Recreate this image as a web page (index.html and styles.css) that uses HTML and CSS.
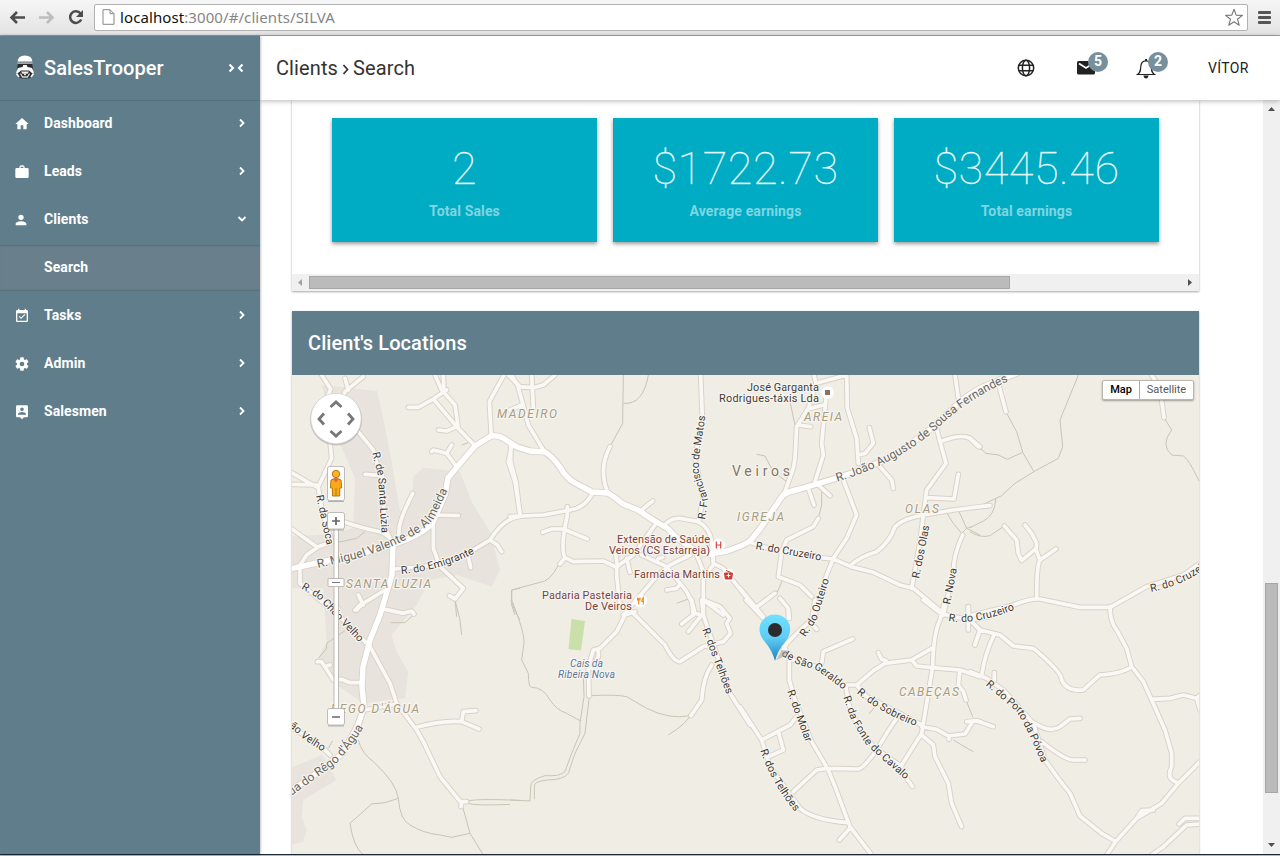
FILE: index.html
```html
<!DOCTYPE html>
<html lang="en">
<head>
<meta charset="utf-8">
<title>SalesTrooper</title>
<link rel="stylesheet" href="styles.css">
</head>
<body>
<svg class="defs" width="0" height="0">
  <symbol id="chev" viewBox="0 0 8 10"><path d="M2 1.5 5.5 5 2 8.500" fill="none" stroke="currentColor" stroke-width="1.800"/></symbol>
</svg>
<div class="browser">
  <svg class="nav-icons" width="94" height="36" viewBox="0 0 94 36" fill="none">
    <path d="M25 17.500H11.500M17 12l-5.500 5.500L17 23" stroke="#4d4d4d" stroke-width="2.600"/>
    <path d="M39 17.500h13.500M47 12l5.500 5.500L47 23" stroke="#bdbdbd" stroke-width="2.600"/>
    <path d="M80.500 13.500A5.800 5.800 0 1 0 81.200 19.500" stroke="#4d4d4d" stroke-width="2.500"/>
    <path d="M83 10v7h-7z" fill="#4d4d4d"/>
  </svg>
  <div class="address">
    <svg width="13" height="16" viewBox="0 0 13 16"><path d="M1 .7h7l4 4v10.600H1zM8 .7v4h4" fill="#fff" stroke="#888"/></svg>
    <span class="url"><b>localhost</b>:3000/#/clients/SILVA</span>
    <svg class="star" width="20" height="19" viewBox="0 0 20 19"><path d="M10 1.300l2.200 5.800 6.200.3-4.900 3.800 1.700 6L10 13.800l-5.200 3.400 1.700-6L1.600 7.400l6.200-.3z" fill="#fff" stroke="#777" stroke-width="1.100" stroke-linejoin="round"/></svg>
  </div>
  <div class="burger"><i></i><i></i><i></i></div>
</div>
<div class="app">
  <aside class="sidebar">
    <div class="brand">
      <svg width="20" height="24" viewBox="0 0 20 24">
        <path d="M3 7.500 1.500 17.500 3 22l4 1.500h6L17 22l1.500-4.500L17 7.500z" fill="#2b2b2b"/>
        <path d="M2.600 6.500Q3 .500 10 .500T17.400 6.500z" fill="#fff"/>
        <path d="M2.500 7.500h15v1.200h-15z" fill="#ddd"/>
        <path d="M8.300 10h3.400l.8 2 4.500 1 2 4.500-1.500 1-3.500-3H6l-3.500 3-1.500-1L3 13l4.500-1z" fill="#fff"/>
        <path d="M6 16.500h8l-1.500 2.300h-5z" fill="#eee"/><path d="M5.500 18.500 7.500 22h5l2-3.500M9 19.500h2" stroke="#ddd" stroke-width="1.300" fill="none"/>
        <path d="M1.500 18.500 4 22M18.500 18.500 16 22" stroke="#fff" stroke-width="1.600"/>
      </svg>
      <span>SalesTrooper</span>
      <svg class="collapse" width="16" height="10" viewBox="0 0 16 10" fill="none" stroke="#fff" stroke-width="2"><path d="M1.500 1.500 5 5 1.500 8.500M14.500 1.500 11 5l3.500 3.500"/></svg>
    </div>
    <a class="item"><svg class="ic" viewBox="0 0 24 24"><path d="M10 20v-6h4v6h5v-8h3L12 3 2 12h3v8z"/></svg>Dashboard<svg class="chev"><use href="#chev"/></svg></a>
    <a class="item"><svg class="ic" viewBox="0 0 24 24"><path d="M20 6h-4V4l-2-2h-4L8 4v2H4a2 2 0 0 0-2 2v11a2 2 0 0 0 2 2h16a2 2 0 0 0 2-2V8a2 2 0 0 0-2-2zm-6 0h-4V4h4z"/></svg>Leads<svg class="chev"><use href="#chev"/></svg></a>
    <a class="item"><svg class="ic person" viewBox="0 0 24 24"><path d="M12 12a4 4 0 1 0 0-8 4 4 0 0 0 0 8zm0 2c-2.700 0-8 1.300-8 4v2h16v-2c0-2.700-5.300-4-8-4z"/></svg>Clients<svg class="chev down"><use href="#chev"/></svg></a>
    <a class="item sub">Search</a>
    <a class="item"><svg class="ic" viewBox="0 0 24 24"><path d="M10.600 16.500 17 10.100 15.900 9l-5.300 5.300-2.200-2.200-1.100 1.100zM19 3h-1V1h-2v2H8V1H6v2H5a2 2 0 0 0-2 2v14c0 1.100.9 2 2 2h14a2 2 0 0 0 2-2V5a2 2 0 0 0-2-2zm0 16H5V8h14z"/></svg>Tasks<svg class="chev"><use href="#chev"/></svg></a>
    <a class="item"><svg class="ic" viewBox="0 0 24 24"><path d="M19.430 12.980c.04-.32.07-.64.07-.98s-.03-.66-.07-.98l2.110-1.650c.19-.15.24-.42.12-.64l-2-3.460c-.12-.22-.39-.3-.61-.22l-2.490 1c-.52-.4-1.080-.73-1.690-.98l-.38-2.650A.49.490 0 0 0 14 2h-4c-.25 0-.46.18-.49.42l-.38 2.650c-.61.25-1.170.59-1.690.98l-2.490-1c-.23-.09-.49 0-.61.22l-2 3.460c-.13.22-.07.49.12.64l2.110 1.650c-.04.32-.07.65-.07.98s.03.66.07.98l-2.110 1.650c-.19.15-.24.42-.12.640l2 3.460c.12.22.39.3.61.22l2.490-1c.52.4 1.080.73 1.690.98l.38 2.650c.03.24.24.42.49.42h4c.25 0 .46-.18.49-.42l.38-2.650c.61-.25 1.170-.59 1.690-.98l2.490 1c.23.09.49 0 .61-.22l2-3.460c.12-.22.07-.49-.12-.64zM12 15.500a3.500 3.500 0 1 1 0-7 3.500 3.500 0 0 1 0 7z"/></svg>Admin<svg class="chev"><use href="#chev"/></svg></a>
    <a class="item"><svg class="ic" viewBox="0 0 24 24"><path d="M19 2H5a2 2 0 0 0-2 2v14c0 1.100.9 2 2 2h4l3 3 3-3h4a2 2 0 0 0 2-2V4a2 2 0 0 0-2-2zm-7 3.300a2.700 2.700 0 1 1 0 5.400 2.700 2.700 0 0 1 0-5.400zM18 16H6v-.9c0-2 4-3.100 6-3.100s6 1.100 6 3.100z"/></svg>Salesmen<svg class="chev"><use href="#chev"/></svg></a>
  </aside>
  <div class="main">
    <header class="topbar">
      <div class="crumbs">Clients <svg width="7" height="11" viewBox="0 0 7 11"><path d="M1.500 1 5.500 5.500 1.500 10" fill="none" stroke="#333" stroke-width="1.700"/></svg> Search</div>
      <svg class="globe" width="18" height="18" viewBox="0 0 18 18" fill="none" stroke="#222" stroke-width="1.500"><circle cx="9" cy="9" r="7.700"/><ellipse cx="9" cy="9" rx="3.600" ry="7.700"/><path d="M2 6.200h14M2 11.800h14"/></svg>
      <div class="note mail"><svg width="18" height="14" viewBox="0 0 18 14"><rect width="18" height="13.500" rx="1.500" fill="#222"/><path d="M2 2.500 9 7l7-4.500" fill="none" stroke="#fff" stroke-width="1.700"/></svg><b>5</b></div>
      <div class="note bell"><svg width="20" height="21" viewBox="0 0 20 21"><path d="M1.500 16.500c3-2 3-4 3.300-8C5 5 7 2.800 10 2.800S15 5 15.200 8.500c.3 4 .3 6 3.300 8z" fill="#fff" stroke="#222" stroke-width="1.200"/><path d="M10 1v2" stroke="#222" stroke-width="2"/><path d="M7.300 17.500h5.400Q12 20.500 10 20.500t-2.700-3z" fill="#222"/></svg><b>2</b></div>
      <span class="user">VÍTOR</span>
    </header>
    <div class="scroller">
      <div class="content">
        <section class="card stats">
          <div class="tiles">
            <div class="tile"><strong>2</strong><span>Total Sales</span></div>
            <div class="tile"><strong>$1722.73</strong><span>Average earnings</span></div>
            <div class="tile"><strong>$3445.46</strong><span>Total earnings</span></div>
          </div>
          <div class="hbar"><svg width="17" height="17" viewBox="0 0 17 17"><path d="M10 5v7L6 8.500z" fill="#a3a3a3"/></svg><i></i><svg width="17" height="17" viewBox="0 0 17 17"><path d="M6 5v7l4-3.500z" fill="#505050"/></svg></div>
        </section>
        <section class="card locations">
          <h2>Client's Locations</h2>
          <div class="map">
          <svg class="streets" viewBox="292 375 907 479" width="907" height="479">
            <defs>
              <g id="minor">
                <g transform="translate(290 375) scale(.33333)"><path d="M95 0 122 42 115 60M220 5 165 50 158 70M165 10 175 45M205 170 250 225 270 300 290 470 303 495M225 298 278 302M368 355Q335 420 328 455L325 490M120 200 125 250 85 335M0 290 55 322 85 338 95 400 125 500 85 515 50 540 30 570 30 625 60 650 130 710M10 328 80 330M0 458 80 515M160 440Q220 460 260 468 290 475 305 495M355 97 385 97 430 72 470 45M435 0 455 45 495 90 505 160M460 0 462 50M430 72 500 155 555 212M445 165 470 168 500 155M425 230 430 225 470 235 485 210M470 235 500 275M604 184 598 80 642 0M655 0 690 35M665 215 655 260 675 320 690 418M690 424Q640 430 600 495L550 525 450 570 312 582M600 495 622 510 635 530M535 545 542 578M430 450 430 520 450 575 520 640 495 672 478 662M430 420 505 422M205 660 220 690M200 705 220 685 285 645"/></g>
                <g transform="translate(290 600) scale(.33333)"><path d="M100 0 210 110 240 140 300 250 320 310 380 390 400 425 450 530 515 610 513 620M512 605H530M285 28 340 40 365 33 372 42M82 185 95 185 130 240 155 238 180 248 215 248M105 200 120 195M375 383Q460 360 515 365L567 387M515 365 520 335 558 332M222 330 320 312M0 380 50 410 100 445 120 465M195 30 215 10M145 25 130 40"/></g>
                <g transform="translate(510 375) scale(.33333)"><path d="M5 0 25 35 70 38 100 30 135 0M65 0 70 100M25 38 45 110 55 150 100 225M0 105 35 90M300 215Q265 280 292 350M0 425 100 420 180 405Q220 400 245 360M2 210 2 260 18 320 30 420M172 395 172 420Q150 520 165 548L150 567M98 472 125 462 160 462 232 492M165 548 190 560 280 558 320 577 320 600 328 680 355 715M318 577 370 540 435 450M350 550 360 592M395 405 428 378M572 0 577 130 555 250 580 370 565 440M460 455Q480 428 510 430L565 440Q600 460 605 500L610 570 600 582M610 530 610 565 640 580 720 680M540 540 480 570 435 610 340 720M395 540 470 575 530 650M470 645 500 640 510 628M440 560 445 550 458 547M560 540 580 590 580 720M318 540 322 577M530 650 545 680 550 720M580 675 640 720"/></g>
                <g transform="translate(510 600) scale(.33333)"><path d="M375 35 345 45 320 95 270 145 250 150 235 200 237 288M265 150 265 170 245 205M365 35 430 100 465 135Q490 185 510 185L580 140 640 125 662 100 650 70 660 55 630 20 580 0M575 0 580 45 595 90 660 280 720 375M605 195Q580 230 575 300L543 347M545 0 555 40 575 45 535 95M555 40 515 72"/></g>
                <g transform="translate(740 375) scale(.33333)"><path d="M222 0 228 25 320 0 322 100 350 190 355 265M228 25 205 100 170 155 165 250 160 280 135 350M175 150 212 155M210 100 250 90M355 240 375 235 400 205 388 158M258 70 245 205 250 240 225 320M205 340 222 390M235 330 270 362M310 315 350 420 320 490 280 550 260 600 245 650 225 720M420 275 455 315 460 340M645 0 655 70M590 160 600 200 618 265 560 345 550 420 540 500 515 640M600 200Q665 175 690 190L720 215M560 368 642 372 655 298M333 570Q360 545 410 530 450 500 465 455 490 430 550 420L640 405 720 395 750 392M25 500 100 525 240 548 280 552 333 575 400 592 480 630 520 640 610 715M235 430 220 455 140 495 125 530 115 605 180 630 215 665M0 640 50 700 70 725M105 655 45 700M120 670 145 700 148 730M668 480Q640 540 640 590L610 720M685 695V740"/></g>
                <g transform="translate(740 600) scale(.33333)"><path d="M18 0 70 55M145 30 145 55M225 0 215 60 180 90 140 130 130 150M230 88 210 65M130 140 160 180 230 200 310 255 350 255 400 212 435 190 515 180 575 145M148 180 148 240 165 300 215 425 265 510 285 560 330 680 395 765M245 190 250 155 338 117M415 158 425 178 438 182M515 180 530 198 575 203 660 210 720 230M660 210 655 255 670 275 678 300M550 0 605 42 690 60 720 90 705 132M615 0 600 60Q580 100 578 200L560 310 545 400 485 495M485 515 518 560M545 380 590 388 625 408 675 402 700 362 720 365M627 418V408M545 405 580 435 585 470 625 550 635 610 665 680M350 255 380 290 460 330 545 375M318 260 325 310 350 370 400 440 485 500M470 355 440 400 410 450Q370 505 355 507L260 505 230 510 160 575M170 350 150 375 65 420M115 395 130 450 90 468M0 320 65 420 90 500 180 625Q220 660 325 668M330 685 298 720M685 20V90M690 60 745 50"/></g>
                <g transform="translate(970 375) scale(.33333)"><path d="M0 190 25 215M85 25 108 110M545 0 570 40 582 128M103 453 140 495 145 535 155 557 195 523M165 450 185 475 200 505 198 525 210 555 258 522M210 555Q200 570 200 670M-10 725 130 690Q180 670 210 672L330 697 420 697 530 635 640 600 690 565"/></g>
                <g transform="translate(970 600) scale(.33333)"><path d="M420 20Q420 65 440 90L470 145 485 200 520 245 545 300 585 390 605 460 605 500Q590 530 610 542L625 550M485 200Q460 220 390 225L340 270Q290 275 275 240 275 215 190 145L130 138 90 105 30 90 0 60M30 90 15 135M72 105Q45 160 35 225M545 298 600 295 640 285 680 295 690 330M680 295 690 285M690 485 625 550 575 610 500 655 437 725 410 765M500 655 515 632 550 630M437 725 395 700 330 648 300 580 265 535 225 480 190 370 100 270 50 235 0 215M195 370Q240 400 270 380L300 357 330 355M215 425Q290 485 315 480H345M73 218V240M627 672 645 655H690M690 672 650 675 580 740 545 765M-10 365 20 362 70 380"/></g>
              </g>
              <g id="major">
                <path d="M290 569 317 563 350 556Q420 541 433 522L445 495 448 478 457 467 475 446 491 436Q498 435 503 438L517 447 530 451 545 452Q552 456 560 467 566 478 575 483L592 492 608 493Q616 498 623 504L638 510 653 520 667 528 677 538 697 552 710 554 727 551Q745 545 750 541L760 529 783 495Q787 492 800 489L837 478Q873 467 900 452L933 427 957 405Q970 392 990 384L1017 373"/>
                <path d="M393 545 392 575 380 615 370 640 363 667 362 687 364 707 358 725 343 753 317 773 288 793"/>
              </g>
              <path id="l1" d="M376 452 382 475 386 540"/><path id="l2" d="M317 564 355 555Q415 537 431 516L448 480"/>
              <path id="l3" d="M401 570Q440 567 478 547"/><path id="l4" d="M320 495 332 550"/>
              <path id="l5" d="M303 585 320 595 335 611 367 645"/><path id="l6" d="M282 715 306 736 337 756"/>
              <path id="l7" d="M283 797 333 761Q355 738 368 710"/><path id="l8" d="M701 519 704 500 695 473 695 458 703 405"/>
              <path id="l9" d="M836 478Q895 460 934 426 965 395 1015 374"/><path id="l10" d="M756 545 830 558"/>
              <path id="l11" d="M915 578 927 518"/><path id="l12" d="M946 604 955 558"/>
              <path id="l13" d="M802 635 813 618 829 566"/><path id="l14" d="M949 617Q975 622 1020 603"/>
              <path id="l15" d="M1150 588Q1180 582 1199 568L1240 535"/><path id="l16" d="M783 652 800 661 818 666 852 691"/>
              <path id="l17" d="M859 690Q885 712 928 726"/><path id="l18" d="M847 696 855 719 870 743 914 782"/>
              <path id="l19" d="M791 690 814 754"/><path id="l20" d="M706 628 736 708"/>
              <path id="l21" d="M764 749Q777 787 805 817"/><path id="l22" d="M988 682 1020 709 1034 735 1050 773"/>
              <linearGradient id="pinfill" x2="0" y2="1"><stop stop-color="#72e0ff"/><stop offset=".5" stop-color="#5fcdf4"/><stop offset="1" stop-color="#1e82bd"/></linearGradient>
            </defs>
            <path class="urban" transform="translate(290 375) scale(.33333)" d="M95 30 262 48 300 230 330 410 365 370 370 305 400 278 510 290 545 380 600 470 630 585 605 635 500 600 420 615 380 690 305 780 320 830 355 890 345 970 220 985 140 930 80 860 110 800 100 640H0V485L110 478 190 460 195 310 130 160Z"/>
            <path class="urban" transform="translate(290 600) scale(.33333)" d="M0 505 95 465 140 540 40 600 35 650 50 690 40 725 0 735Z"/>
            <path d="M571.500 619 585 621 581 650.500 568.500 649z" fill="#cadfaa"/>
            <g class="trail">
              <path transform="translate(290 375) scale(.33333)" d="M130 505 200 490 225 470M495 675 500 725M690 640 665 645 665 680M515 210 535 203"/>
              <path transform="translate(290 600) scale(.33333)" d="M495 0 510 60 515 105M663 0Q670 30 690 60M515 610 540 700 580 765M530 605Q540 595 690 601M530 610Q560 618 660 613M205 420Q215 460 250 485 320 550 325 595 330 660 360 675 400 700 450 705L485 712 540 700M325 595 285 608 245 612 180 670Q190 740 220 765M165 92 110 130 110 145 85 175M370 45 345 68 302 68M115 445 128 422"/>
              <path transform="translate(510 375) scale(.33333)" d="M340 0 338 145 300 215M340 85Q400 90 415 0M145 570Q120 620 90 622L5 645 5 690 15 720M500 685 535 672"/>
              <path transform="translate(510 600) scale(.33333)" d="M5 0Q45 100 42 130L35 180 55 220Q55 262 65 262 100 262 120 300 140 330 170 340L210 362M245 287Q320 283 350 290L410 325Q480 360 540 347 530 370 475 405M220 220 222 290 210 370 210 400 185 460 165 515Q150 530 105 527 60 540 62 560L60 603 0 600M238 290 225 400 195 460 175 520Q160 540 110 540 70 545 73 560V598"/>
              <path transform="translate(740 375) scale(.33333)" d="M245 350 245 390 235 430M50 238 75 243 100 290 140 320M150 80 165 150M615 405 640 445 665 475 680 460 655 405M680 460 720 480M680 460 695 455M130 610 110 655"/>
              <path transform="translate(740 600) scale(.33333)" d="M387 342 405 320M680 305 698 350M640 420 665 435 700 455"/>
              <path transform="translate(970 375) scale(.33333)" d="M110 115 140 170 158 232 192 290M28 218 48 235 85 240 112 253 158 232M325 0 270 135 278 215 265 250 192 290 135 325 95 362 40 388M77 372Q75 420 40 438L0 458M0 470Q30 490 60 482L100 455M582 128 605 165Q570 210 605 240L640 243Q655 250 687 318"/>
            </g>
            <use href="#minor" class="road minor-case"/><use href="#major" class="road major-case"/>
            <use href="#minor" class="road minor-fill"/><use href="#major" class="road major-fill"/>
            <g class="area">
              <text x="497" y="418" textLength="60">MADEIRO</text><text x="804" y="421" textLength="38">AREIA</text>
              <text x="737" y="521" textLength="47">IGREJA</text><text x="905" y="513" textLength="34">OLAS</text>
              <text x="346" y="588" textLength="85">SANTA LUZIA</text><text x="331" y="713" textLength="88">REGO D'ÁGUA</text>
              <text x="899" y="696" textLength="60">CABEÇAS</text>
            </g>
            <g class="street">
              <text dy="4"><textPath href="#l1">R. de Santa Lúzia</textPath></text>
              <text dy="4" class="big"><textPath href="#l2">R. Miguel Valente de Almeida</textPath></text>
              <text dy="4"><textPath href="#l3">R. do Emigrante</textPath></text>
              <text dy="4"><textPath href="#l4">R. da Soca</textPath></text>
              <text dy="4"><textPath href="#l5">R. do Chão Velho</textPath></text>
              <text dy="4"><textPath href="#l6">Chão Velho</textPath></text>
              <text dy="4" class="big"><textPath href="#l7">Rua do Rêgo d'Água</textPath></text>
              <text dy="4"><textPath href="#l8">R. Francisco de Matos</textPath></text>
              <text dy="4" class="big"><textPath href="#l9">R. João Augusto de Sousa Fernandes</textPath></text>
              <text dy="4"><textPath href="#l10">R. do Cruzeiro</textPath></text>
              <text dy="4"><textPath href="#l11">R. dos Olas</textPath></text>
              <text dy="4"><textPath href="#l12">R. Nova</textPath></text>
              <text dy="4"><textPath href="#l13">R. do Outeiro</textPath></text>
              <text dy="4"><textPath href="#l14">R. do Cruzeiro</textPath></text>
              <text dy="4"><textPath href="#l15">R. do Cruzeiro</textPath></text>
              <text dy="4"><textPath href="#l16">de São Geraldo</textPath></text>
              <text dy="4"><textPath href="#l17">R. do Sobreiro</textPath></text>
              <text dy="4"><textPath href="#l18">R. da Fonte do Cavalo</textPath></text>
              <text dy="4"><textPath href="#l19">R. do Molar</textPath></text>
              <text dy="4"><textPath href="#l20">R. dos Telhões</textPath></text>
              <text dy="4"><textPath href="#l21">R. dos Telhões</textPath></text>
              <text dy="4"><textPath href="#l22">R. do Porto da Póvoa</textPath></text>
            </g>
            <text class="town" x="732" y="476" textLength="58">Veiros</text>
            <g class="poi">
              <text x="617" y="543" textLength="93">Extensão de Saúde</text><text x="609" y="554" textLength="101">Veiros (CS Estarreja)</text>
              <text x="634" y="578" textLength="86">Farmácia Martins</text>
              <text x="542" y="599" textLength="90">Padaria Pastelaria</text><text x="585" y="610" textLength="47">De Veiros</text>
            </g>
            <g class="poi dark"><text x="747" y="391" textLength="72">José Garganta</text><text x="719" y="402" textLength="100">Rodrigues-táxis Lda</text></g>
            <g class="poi water"><text x="570" y="667" textLength="33">Cais da</text><text x="558" y="678" textLength="57">Ribeira Nova</text></g>
            <g fill="#fff"><circle cx="718.500" cy="545" r="6.300"/><circle cx="728.500" cy="575" r="6.300"/><circle cx="640.500" cy="601" r="6.300"/><circle cx="827.500" cy="392.500" r="6.300"/></g>
            <path d="M716.300 541.500v7M720.700 541.500v7M716.300 545h4.400" stroke="#d9443a" stroke-width="1.200" fill="none"/>
            <path d="M724.500 573h8l-.8 6h-6.400zM726 570.500l5 2" fill="#d33c32" stroke="#d33c32"/><path d="M728.500 573.500v4M726.500 575.500h4" stroke="#fff"/>
            <path d="M637.500 597.500v2.500h2.500v-2.500M638.700 598v6.500M643.300 604.500v-7q-1.500 1-1.500 4h1.500" fill="none" stroke="#ef8a1d" stroke-width="1.100"/>
            <rect x="825" y="390" width="5" height="5" fill="#8d6e63"/>
            <path d="M776 660 782 650 789 651Q786 657 776 660z" fill="#999" opacity=".5"/>
            <path d="M775 661Q772 650 765 642 759.500 636 759.500 629.500A15.300 15 0 0 1 790.200 629.500Q790 636 785 642 778 650 775 661z" fill="url(#pinfill)"/>
            <circle cx="775" cy="630" r="7" fill="#2c2c2e"/>
          </svg>
          <svg class="controls" viewBox="300 385 76 350" width="76" height="350">
            <circle cx="336" cy="419.500" r="26" fill="#999" opacity=".5"/><circle cx="336" cy="418.500" r="25.200" fill="#fff" stroke="#ccc" stroke-width=".6"/>
            <path d="M330.500 407l5.500-5 5.500 5M330.500 431l5.500 5 5.500-5M324 413.500l-5 5.500 5 5.500M348 413.500l5 5.500-5 5.500" fill="none" stroke="#777" stroke-width="2.800"/>
            <g fill="#fff" stroke="#b0aca5" stroke-width=".8"><rect x="334" y="528" width="4.500" height="182"/><rect x="327.500" y="466.500" width="17" height="34" rx="2"/><rect x="327.500" y="512.500" width="17" height="16.500" rx="2"/><rect x="327.500" y="708.500" width="17" height="16.500" rx="2"/><rect x="328" y="578.500" width="16" height="8" rx="1"/></g>
            <path d="M328 501.500h16M328 530h16M328 726h16" stroke="#777" opacity=".5"/>
            <path d="M332 521h8M336 517v8M332 717h8" stroke="#666" stroke-width="1.700"/><path d="M332 582.500h8" stroke="#777"/>
            <path d="M331 480q5-3 10 0l.7 8h-2v8h-7.300v-8h-2z" fill="#f9ab17" stroke="#b97808"/><path d="M336 488v8" stroke="#b97808"/><circle cx="336" cy="474" r="3.700" fill="#fbb32b" stroke="#b97808"/><path d="M332.500 478.500h7l-3.500 4z" fill="#ec6050"/>
          </svg>
          <div class="maptype"><b>Map</b><span>Satellite</span></div>
          </div>
        </section>
      </div>
      <div class="vbar"><svg width="17" height="17" viewBox="0 0 17 17"><path d="M5 11h7L8.500 7z" fill="#505050"/></svg><i></i><svg width="17" height="17" viewBox="0 0 17 17"><path d="M5 6h7l-3.500 4z" fill="#505050"/></svg></div>
    </div>
  </div>
</div>
<div class="edge"></div>
</body>
</html>
```
FILE: styles.css
```css
* { box-sizing: border-box; }
body { margin: 0; height: 856px; overflow: hidden; display: flex; flex-direction: column; font-family: Roboto, sans-serif; background: #fff; }
.defs { position: absolute; }
.browser { flex: none; height: 36px; display: flex; align-items: center; background: linear-gradient(#f6f6f6, #e3e3e3); border-bottom: 1px solid #a3a3a3; }
.address { flex: none; width: 1154px; height: 27px; margin-top: -1px; border: 1px solid #b2b2b2; border-radius: 2px; background: #fff; display: flex; align-items: center; padding: 0 3px 0 7px; }
.url { margin-left: 5px; font: 15px "Noto Sans", sans-serif; color: #858585; letter-spacing: .09px; }
.url b { font-weight: 400; color: #111; }
.star { margin-left: auto; }
.burger { display: flex; flex-direction: column; gap: 2px; margin-left: 10px; }
.burger i { width: 13px; height: 3px; background: #555; border-radius: 1px; }
.app { display: flex; height: 818px; flex: none; }
.sidebar { width: 260px; background: #607d8b; color: #fff; box-shadow: 0 0 3px rgba(0,0,0,.4); z-index: 3; }
.brand { height: 65px; border-bottom: 1px solid #546e7a; display: flex; align-items: center; padding: 0 16px 0 15px; font-size: 20px; font-weight: 500; letter-spacing: .05px; }
.brand span { margin-left: 9px; }
.brand svg:first-child { margin-top: -3px; }
.collapse { margin-left: auto; }
.item { height: 48px; display: flex; align-items: center; padding: 0 14px 4px 44px; font-size: 14px; font-weight: 700; letter-spacing: .08px; }
.ic { width: 16px; height: 16px; fill: #fff; margin: 1px 14px 0 -30px; }
.ic.person { margin-left: -31px; margin-right: 15px; }
.chev { width: 8px; height: 10px; margin-left: auto; }
.chev.down { transform: rotate(90deg); }
.sub { background: #69808c; box-shadow: inset 0 2px 2px -1px rgba(0,0,0,.16), inset 0 -2px 2px -1px rgba(0,0,0,.16); height: 46px; margin-bottom: 2px; padding-bottom: 3px; }
.main { flex: 1; min-width: 0; display: flex; flex-direction: column; }
.topbar { flex: none; height: 64px; background: #fff; box-shadow: 0 1px 5px rgba(0,0,0,.3); z-index: 2; display: flex; align-items: center; padding: 0 31px 0 16px; }
.crumbs { font-size: 20px; color: #333; margin-right: auto; letter-spacing: .1px; }
.crumbs svg { vertical-align: 0; margin: 0 -.5px 0 -1.5px; }
.note { position: relative; display: flex; }
.mail { margin-left: 42px; } .bell { margin-left: 41px; }
.note b { position: absolute; top: -9px; left: 11px; width: 20px; height: 20px; border-radius: 50%; background: #78909c; color: #fff; font-size: 14px; line-height: 19px; text-align: center; }
.bell b { top: -6px; left: 12px; }
.user { font-size: 14px; color: #212121; letter-spacing: .35px; margin: -1px 0 0 52px; width: 41px; white-space: nowrap; }
.scroller { flex: 1; min-height: 0; display: flex; justify-content: space-between; overflow: hidden; }
.content { width: 907px; margin-left: 32px; }
.card { box-shadow: 0 1px 2px rgba(0,0,0,.35); }
.stats { height: 191px; background: #fff; display: flex; flex-direction: column; justify-content: space-between; }
.tiles { display: flex; gap: 16px; padding: 18px 40px 0; }
.tile { flex: 1; height: 124px; background: #00acc4; color: rgba(255,255,255,.9); box-shadow: 0 2px 4px rgba(0,0,0,.4); display: flex; flex-direction: column; align-items: center; }
.tile strong { font-size: 45px; line-height: 54px; font-weight: 100; margin-top: 24px; letter-spacing: .5px; -webkit-text-stroke: .3px rgba(255,255,255,.75); }
.tile span { font-size: 14px; line-height: 16px; font-weight: 700; margin-top: 7px; color: rgba(255,255,255,.5); letter-spacing: .14px; }
.hbar { height: 17px; background: #f0f0f0; display: flex; justify-content: space-between; align-items: center; }
.hbar i { width: 701px; height: 13px; background: #bbb; border: 1px solid #a6a6a6; margin-right: auto; }
.locations { margin-top: 20px; height: 550px; }
h2 { margin: 0; height: 64px; line-height: 64px; padding-left: 16px; background: #607d8b; color: #fff; font-size: 20px; font-weight: 500; letter-spacing: .08px; }
.map { position: relative; height: 486px; background: #f0ede5; overflow: hidden; }
.streets { display: block; }
.urban { fill: #e8e4dd; }
.trail { fill: none; stroke: #c8c4b5; stroke-width: 3; stroke-linejoin: round; }
.road { fill: none; stroke-linecap: round; stroke-linejoin: round; }
.road path, #minor path, #major path { vector-effect: non-scaling-stroke; }
.minor-case { stroke: #d9d1c7; stroke-width: 5.6; }
.minor-fill { stroke: #faf8f5; stroke-width: 3.7; }
.major-case { stroke: #d9d2c8; stroke-width: 7.2; }
.major-fill { stroke: #fff; stroke-width: 5.4; }
.streets text { font-family: Roboto, sans-serif; paint-order: stroke; stroke: #f7f5f0; stroke-width: 2.4px; stroke-linejoin: round; }
.street text { font-size: 10.7px; fill: #3f3a35; }
.street text.big { font-size: 12px; fill: #69655f; }
.area text { font-size: 12px; font-style: italic; fill: #a89c80; }
.streets .town { font-size: 14px; fill: #827860; }
.poi text { font-size: 11px; fill: #7d3d38; }
.poi.dark text { fill: #3f3a38; }
.poi.water text { fill: #5c7499; font-style: italic; font-size: 10.5px; }
.controls { position: absolute; left: 8px; top: 10px; }
.maptype { position: absolute; top: 5px; right: 5px; width: 92px; height: 20px; background: #fff; border: 1px solid #b9b6b0; border-radius: 2px; box-shadow: 0 1px 2px rgba(0,0,0,.35); display: flex; font-size: 11px; line-height: 17px; color: #565656; }
.maptype b { width: 37px; text-align: center; border-right: 1px solid #aaa; color: #000; font-weight: 500; }
.maptype span { flex: 1; text-align: center; }
.vbar { width: 17px; background: #f0f0f0; display: flex; flex-direction: column; align-items: center; }
.vbar i { width: 13px; height: 210px; background: #bbb; border: 1px solid #a6a6a6; margin: 466px 0 auto; }
.edge { flex: none; height: 2px; border-top: 1px solid #1d2833; background: #a9bccd; }
```
